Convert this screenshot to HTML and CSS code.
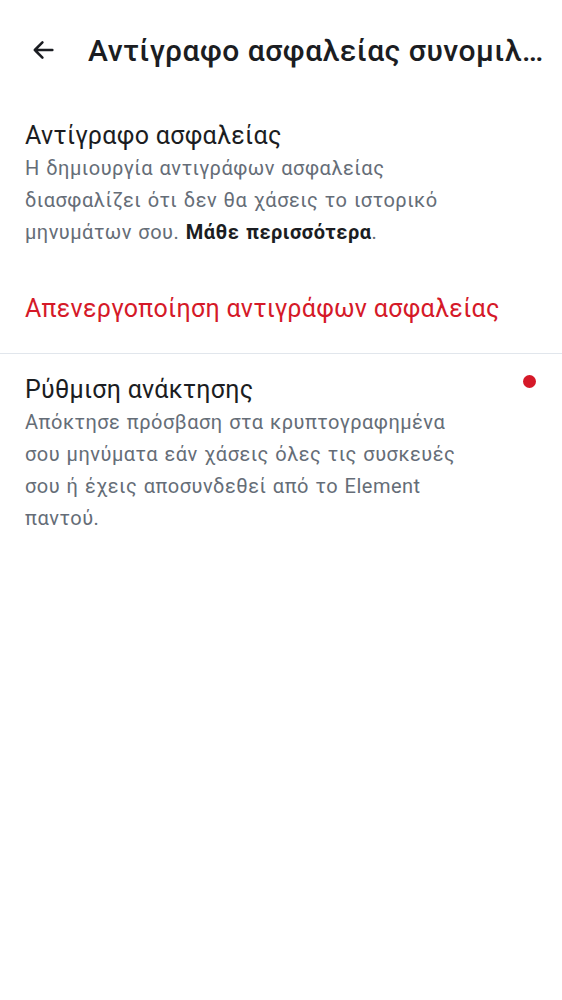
FILE: index.html
```html
<!DOCTYPE html>
<html lang="el">
<head>
<meta charset="utf-8">
<link rel="stylesheet" href="styles.css">
</head>
<body>
<header class="topbar">
  <svg class="back" viewBox="0 0 24 24" width="28" height="28"><path d="M20 12H5M11.5 5.5L5 12l6.5 6.5" fill="none" stroke="#1b1d22" stroke-width="2.2" stroke-linecap="round" stroke-linejoin="round"/></svg>
  <h1 class="title">Αντίγραφο ασφαλείας συνομιλιών</h1>
</header>
<section class="item item-first">
  <div class="item-title">Αντίγραφο ασφαλείας</div>
  <div class="item-desc">Η δημιουργία αντιγράφων ασφαλείας διασφαλίζει ότι δεν θα χάσεις το ιστορικό μηνυμάτων σου. <b>Μάθε περισσότερα</b>.</div>
</section>
<div class="action">Απενεργοποίηση αντιγράφων ασφαλείας</div>
<hr class="divider">
<section class="item item-row">
  <div class="item-body">
    <div class="item-title">Ρύθμιση ανάκτησης</div>
    <div class="item-desc">Απόκτησε πρόσβαση στα κρυπτογραφημένα σου μηνύματα εάν χάσεις όλες τις συσκευές σου ή έχεις αποσυνδεθεί από το Element παντού.</div>
  </div>
  <span class="dot"></span>
</section>
</body>
</html>
```
FILE: styles.css
```css
html, body { margin: 0; padding: 0; background: #fff; }
body { font-family: Roboto, "Noto Sans", sans-serif; color: #1b1d22; width: 562px; }
.topbar { display: flex; align-items: center; height: 100px; padding: 0 14px 0 29px; box-sizing: border-box; }
.back { flex: none; margin-right: 31px; }
.title { margin: 0; font-size: 30px; font-weight: 500; white-space: nowrap; overflow: hidden; text-overflow: ellipsis; letter-spacing: 0.5px; }
.item { padding: 20px 25px 0; }
.item-first { padding-right: 79px; }
.item-title { font-size: 25px; line-height: 32px; letter-spacing: 0.3px; }
.item-desc { font-size: 20px; line-height: 32px; color: #656d77; letter-spacing: 0.5px; word-spacing: 1px; }
.item-desc b { color: #1b1d22; font-weight: 700; }
.action { padding: 45px 25px 28px; font-size: 25px; line-height: 32px; color: #d51928; letter-spacing: 0.3px; }
.divider { margin: 0; border: 0; border-top: 1px solid #e1e6ec; }
.item-row { display: flex; align-items: flex-start; padding-right: 26px; }
.item-body { flex: 1; padding-right: 48px; }
.dot { flex: none; width: 13px; height: 13px; border-radius: 50%; background: #d51928; margin-top: 1px; }
```
